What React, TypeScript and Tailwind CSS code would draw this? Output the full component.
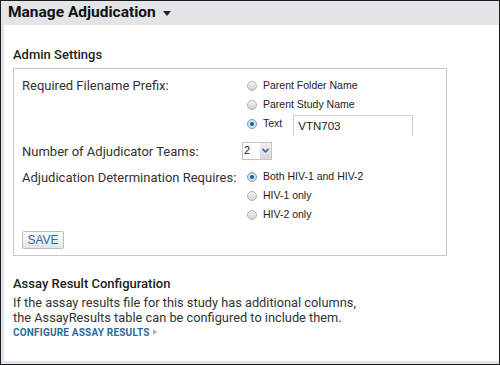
import React from 'react';

const roboto = { fontFamily: 'Roboto, "Liberation Sans", sans-serif' };
const arial = { fontFamily: '"Liberation Sans", Arial, sans-serif' };

const Radio = ({ checked }: { checked?: boolean }) =>
  checked ? (
    <span className="inline-flex h-[10px] w-[10px] shrink-0 items-center justify-center rounded-full border border-[#7d9bb8] bg-[#cfe0ee]">
      <span className="h-[4px] w-[4px] rounded-full bg-[#1a5d96]" />
    </span>
  ) : (
    <span className="inline-block h-[10px] w-[10px] shrink-0 rounded-full border border-[#b4b4b4] bg-gradient-to-b from-[#f4f4f4] to-[#d2d2d2]" />
  );

const Option = ({ label, checked }: { label: string; checked?: boolean }) => (
  <div className="flex h-[19px] items-center gap-[6px] pl-[1px]">
    <Radio checked={checked} />
    <span className="text-[10.5px] text-[#222]">{label}</span>
  </div>
);

export default function App() {
  return (
    <div className="flex h-[365px] w-[500px] flex-col border border-[#1c1c1c] bg-[#e1e5e8]" style={arial}>
      <div className="flex h-[24px] shrink-0 items-center gap-[7px] pl-[7px]" style={roboto}>
        <span className="text-[15.5px] font-bold text-[#111]">Manage Adjudication</span>
        <svg width="8" height="5" viewBox="0 0 8 5">
          <path d="M0 0h8L4 5z" fill="#222" />
        </svg>
      </div>

      <div className="mb-[3px] ml-[3px] flex-1 bg-white pl-[9px] pr-[52px]" style={roboto}>
        <div className="pt-[20px] text-[13px] font-medium text-[#222]">Admin Settings</div>

        <div className="mt-[3px] border border-[#c9c9c9] pb-[6px] pl-[8px] pr-[4px] pt-[8px] text-[13px] text-[#333]">
          <div className="grid grid-cols-[224px_1fr]">
            <div className="flex h-[19px] items-center">Required Filename Prefix:</div>
            <div style={arial}>
              <Option label="Parent Folder Name" />
              <Option label="Parent Study Name" />
              <div className="flex items-start">
                <div className="flex h-[19px] items-center gap-[6px] pl-[1px]">
                  <Radio checked />
                  <span className="text-[10.5px] text-[#222]">Text</span>
                </div>
                <div className="ml-[11px] flex h-[21px] w-[120px] items-center border border-b-0 border-[#cfcfcf] pl-[4px] pt-[2px] text-[11.5px] text-[#222]">
                  VTN703
                </div>
              </div>
            </div>

            <div className="mt-[6px] flex h-[18px] items-center pt-[3px]">Number of Adjudicator Teams:</div>
            <div className="mt-[6px]" style={arial}>
              <div className="-ml-[4px] flex h-[18px] w-[30px] items-center border border-[#c4c4c4] bg-white">
                <span className="pl-[1px] text-[11px] text-[#222]">2</span>
                <span className="ml-auto flex h-full w-[11px] items-center justify-center bg-gradient-to-b from-[#f0f0f0] to-[#d8d8d8]">
                  <svg width="7" height="5" viewBox="0 0 7 5">
                    <path d="M0.5 0.8L3.5 3.8L6.5 0.8" stroke="#2f67a6" strokeWidth="1.6" fill="none" />
                  </svg>
                </span>
              </div>
            </div>

            <div className="mt-[8px] flex h-[19px] items-center pt-[2px]">Adjudication Determination Requires:</div>
            <div className="mt-[8px]" style={arial}>
              <Option label="Both HIV-1 and HIV-2" checked />
              <Option label="HIV-1 only" />
              <Option label="HIV-2 only" />
            </div>
          </div>

          <button
            className="mt-[6px] flex h-[18px] w-[42px] items-center justify-center rounded-[2px] border border-[#bdbdbd] bg-gradient-to-b from-white to-[#e4e4e4] text-[12px] text-[#2e6aa8]"
            style={arial}
          >
            SAVE
          </button>
        </div>

        <div className="mt-[20px] text-[13px] font-medium leading-[15px] text-[#222]">Assay Result Configuration</div>
        <div className="mt-[4px] text-[12.8px] leading-[15px] text-[#333]">
          If the assay results file for this study has additional columns,
          <br />
          the AssayResults table can be configured to include them.
        </div>
        <div className="flex items-center gap-[3px]">
          <span className="text-[10px] font-bold tracking-[0.2px] text-[#2d6aa0]">CONFIGURE ASSAY RESULTS</span>
          <svg width="4" height="6" viewBox="0 0 4 6">
            <path d="M0 0L4 3L0 6z" fill="#b0b0b0" />
          </svg>
        </div>
      </div>
    </div>
  );
}
